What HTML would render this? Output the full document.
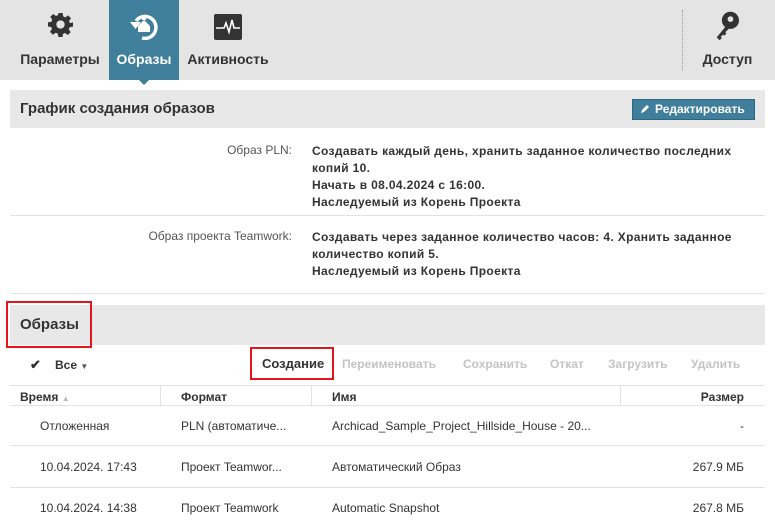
<!DOCTYPE html>
<html><head><meta charset="utf-8"><style>
*{margin:0;padding:0;box-sizing:border-box}
body{width:775px;height:524px;overflow:hidden;background:#fff;font-family:"Liberation Sans",sans-serif;color:#333;position:relative;font-size:12px}
.a{position:absolute;white-space:nowrap}
.b{font-weight:bold}
.top{position:absolute;left:0;top:0;width:775px;height:80px;background:#e4e4e4}
.tab{position:absolute;top:0;height:80px;text-align:center;font-weight:bold;font-size:14px;color:#333}
.tab span{position:absolute;left:0;right:0;top:51px}
.hdr{position:absolute;left:10px;width:755px;background:#e8e8e8}
.line{position:absolute;height:1px;background:#e2e2e2}
.red{position:absolute;border:2px solid #e8141b}
.g{color:#c4c4c4;font-weight:bold}
</style></head><body>
<div class="top"></div>
<div class="tab" style="left:10px;width:100px"><svg class="a" style="left:38px;top:12px" width="25" height="25" viewBox="0 0 24 24"><path fill="#333" d="M10 1h4l.6 3.2 2 .9 2.7-1.9 2.8 2.8-1.9 2.7.9 2L24 10v4l-3.2.6-.9 2 1.9 2.7-2.8 2.8-2.7-1.9-2 .9L14 24h-4l-.6-3.2-2-.9-2.7 1.9-2.8-2.8 1.9-2.7-.9-2L0 14v-4l3.2-.6.9-2L2.2 4.7 5 1.9l2.7 1.9 2-.9z"/><circle cx="12" cy="12" r="4" fill="#e4e4e4"/></svg><span>Параметры</span></div>
<div class="tab" style="left:109px;width:70px;background:#3f7f9b;color:#fff"><svg class="a" style="left:19px;top:11px" width="32" height="30" viewBox="0 0 32 30"><path d="M8 10A11 11 0 1 1 14 27" stroke="#fff" stroke-width="3.5" fill="none"/><path d="M2 11h11l-5.5 7z" fill="#fff"/><path d="M10 15l6-6 6 6v6H10z" fill="#fff"/><rect x="14" y="6" width="4" height="3" fill="#fff"/></svg><span>Образы</span></div>
<div class="a" style="left:139px;top:80px;width:0;height:0;border-left:5px solid transparent;border-right:5px solid transparent;border-top:5px solid #3f7f9b"></div>
<div class="tab" style="left:180px;width:96px"><svg class="a" style="left:34px;top:14px" width="28" height="26" viewBox="0 0 28 26"><rect width="28" height="26" rx="2" fill="#333"/><path d="M2 14h8l2-5 3 9 3-12 2 8h6" stroke="#fff" stroke-width="1.6" fill="none"/></svg><span>Активность</span></div>
<div class="a" style="left:682px;top:10px;height:60px;border-left:1px dotted #999"></div>
<div class="tab" style="left:690px;width:75px"><svg class="a" style="left:22px;top:10px" width="30" height="32" viewBox="0 0 24 28"><circle cx="15" cy="9" r="7.5" fill="#333"/><circle cx="15" cy="8" r="2.5" fill="#e4e4e4"/><path d="M12 13L3 24l2.5 2.5 2-2-1-1 2-2 1 1 2-2-1-1 4.5-4.5z" fill="#333"/></svg><span>Доступ</span></div>

<div class="hdr" style="top:90px;height:38px"></div>
<div class="a b" style="left:20px;top:100px;font-size:15px">График создания образов</div>
<div class="a b" style="left:632px;top:99px;width:123px;height:21px;background:#3f7f9b;border:1px solid #2c6680;color:#fff;font-size:12px;line-height:19px;padding-left:22px">Редактировать</div>
<svg class="a" style="left:640px;top:104px" width="10" height="10" viewBox="0 0 10 10"><path d="M1 9l1-3 5-5 2 2-5 5z" fill="#fff"/></svg>

<div class="a" style="left:100px;width:192px;text-align:right;top:143px;color:#555">Образ PLN:</div>
<div class="a b" style="left:312px;top:143px;line-height:17px;letter-spacing:0.35px">Создавать каждый день, хранить заданное количество последних<br>копий 10.<br>Начать в 08.04.2024 с 16:00.<br>Наследуемый из Корень Проекта</div>
<div class="line" style="left:10px;width:755px;top:215px"></div>
<div class="a" style="left:100px;width:192px;text-align:right;top:229px;color:#555">Образ проекта Teamwork:</div>
<div class="a b" style="left:312px;top:229px;line-height:17px;letter-spacing:0.35px">Создавать через заданное количество часов: 4. Хранить заданное<br>количество копий 5.<br>Наследуемый из Корень Проекта</div>
<div class="line" style="left:10px;width:755px;top:293px"></div>

<div class="hdr" style="top:305px;height:40px"></div>
<div class="a b" style="left:20px;top:316px;font-size:15px">Образы</div>
<div class="red" style="left:6px;top:301px;width:86px;height:47px"></div>

<div class="a b" style="left:30px;top:357px;font-size:13px">✔</div>
<div class="a b" style="left:55px;top:358px">Все <span style="font-size:8px;color:#555">▼</span></div>
<div class="a b" style="left:262px;top:356px;font-size:13px">Создание</div>
<div class="red" style="left:250px;top:347px;width:84px;height:33px"></div>
<div class="a g" style="left:342px;top:357px">Переименовать</div>
<div class="a g" style="left:463px;top:357px">Сохранить</div>
<div class="a g" style="left:550px;top:357px">Откат</div>
<div class="a g" style="left:608px;top:357px">Загрузить</div>
<div class="a g" style="left:691px;top:357px">Удалить</div>

<div class="line" style="left:10px;width:755px;top:385px"></div>
<div class="a b" style="left:20px;top:390px">Время <span style="font-size:8px;color:#bbb">▲</span></div>
<div class="a b" style="left:181px;top:390px">Формат</div>
<div class="a b" style="left:332px;top:390px">Имя</div>
<div class="a b" style="left:690px;width:54px;text-align:right;top:390px">Размер</div>
<div class="a" style="left:160px;top:386px;width:1px;height:20px;background:#e2e2e2"></div>
<div class="a" style="left:311px;top:386px;width:1px;height:20px;background:#e2e2e2"></div>
<div class="a" style="left:620px;top:386px;width:1px;height:20px;background:#e2e2e2"></div>
<div class="line" style="left:10px;width:755px;top:405px"></div>

<div class="a" style="left:40px;top:419px">Отложенная</div>
<div class="a" style="left:181px;top:419px">PLN (автоматиче...</div>
<div class="a" style="left:332px;top:419px">Archicad_Sample_Project_Hillside_House - 20...</div>
<div class="a" style="left:690px;width:54px;text-align:right;top:419px">-</div>
<div class="line" style="left:10px;width:755px;top:445px"></div>
<div class="a" style="left:40px;top:460px">10.04.2024. 17:43</div>
<div class="a" style="left:181px;top:460px">Проект Teamwor...</div>
<div class="a" style="left:332px;top:460px">Автоматический Образ</div>
<div class="a" style="left:680px;width:64px;text-align:right;top:460px">267.9 МБ</div>
<div class="line" style="left:10px;width:755px;top:487px"></div>
<div class="a" style="left:40px;top:501px">10.04.2024. 14:38</div>
<div class="a" style="left:181px;top:501px">Проект Teamwork</div>
<div class="a" style="left:332px;top:501px">Automatic Snapshot</div>
<div class="a" style="left:680px;width:64px;text-align:right;top:501px">267.8 МБ</div>
</body></html>
